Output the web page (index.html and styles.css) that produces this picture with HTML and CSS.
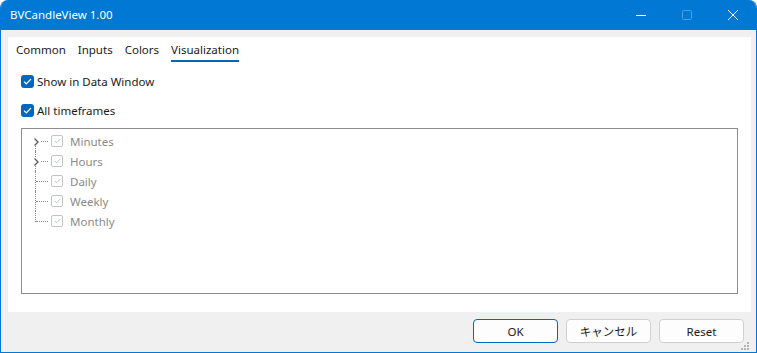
FILE: index.html
```html
<!DOCTYPE HTML>
<html>

<head>
    <title>BVCandleView 1.00</title>
    <meta http-equiv="Content-Type" content="text/html; charset=utf-8" />
    <link rel="stylesheet" href="styles.css">
</head>

<body>
    <div class="window">
        <div class="titlebar">
            <span class="caption">BVCandleView 1.00</span>
            <div class="sysbtns">
                <span class="sysbtn">
                    <svg width="10" height="10" viewBox="0 0 10 10"><path d="M0 5.5h10" stroke="#fff" stroke-width="1"/></svg>
                </span>
                <span class="sysbtn disabled">
                    <svg width="10" height="10" viewBox="0 0 10 10"><rect x="0.5" y="0.5" width="9" height="9" rx="1" fill="none" stroke="#fff" stroke-width="1"/></svg>
                </span>
                <span class="sysbtn">
                    <svg width="10" height="10" viewBox="0 0 10 10"><path d="M0 0L10 10M10 0L0 10" stroke="#fff" stroke-width="1"/></svg>
                </span>
            </div>
        </div>

        <div class="content">
            <div class="panel">
                <div class="tabs">
                    <span class="tab">Common</span>
                    <span class="tab">Inputs</span>
                    <span class="tab">Colors</span>
                    <span class="tab active">Visualization</span>
                </div>

                <label class="check">
                    <span class="box on"><svg width="9" height="7" viewBox="0 0 9 7"><path d="M1 3.6L3.3 5.8L8 1" fill="none" stroke="#fff" stroke-width="1.2"/></svg></span>
                    Show in Data Window
                </label>
                <label class="check">
                    <span class="box on"><svg width="9" height="7" viewBox="0 0 9 7"><path d="M1 3.6L3.3 5.8L8 1" fill="none" stroke="#fff" stroke-width="1.2"/></svg></span>
                    All timeframes
                </label>

                <div class="tree">
                    <div class="node first">
                        <span class="expander"><svg width="5" height="8" viewBox="0 0 5 8"><path d="M0.5 0.5L4 4L0.5 7.5" fill="none" stroke="#5a5a5a" stroke-width="1.3"/></svg></span>
                        <span class="box off"><svg width="7" height="6" viewBox="0 0 7 6"><path d="M0.8 3L2.6 4.8L6.2 1" fill="none" stroke="#a9c6e6" stroke-width="1"/></svg></span>
                        <span class="label">Minutes</span>
                    </div>
                    <div class="node">
                        <span class="expander"><svg width="5" height="8" viewBox="0 0 5 8"><path d="M0.5 0.5L4 4L0.5 7.5" fill="none" stroke="#5a5a5a" stroke-width="1.3"/></svg></span>
                        <span class="box off"><svg width="7" height="6" viewBox="0 0 7 6"><path d="M0.8 3L2.6 4.8L6.2 1" fill="none" stroke="#a9c6e6" stroke-width="1"/></svg></span>
                        <span class="label">Hours</span>
                    </div>
                    <div class="node">
                        <span class="box off"><svg width="7" height="6" viewBox="0 0 7 6"><path d="M0.8 3L2.6 4.8L6.2 1" fill="none" stroke="#a9c6e6" stroke-width="1"/></svg></span>
                        <span class="label">Daily</span>
                    </div>
                    <div class="node">
                        <span class="box off"><svg width="7" height="6" viewBox="0 0 7 6"><path d="M0.8 3L2.6 4.8L6.2 1" fill="none" stroke="#a9c6e6" stroke-width="1"/></svg></span>
                        <span class="label">Weekly</span>
                    </div>
                    <div class="node last">
                        <span class="box off"><svg width="7" height="6" viewBox="0 0 7 6"><path d="M0.8 3L2.6 4.8L6.2 1" fill="none" stroke="#a9c6e6" stroke-width="1"/></svg></span>
                        <span class="label">Monthly</span>
                    </div>
                </div>
            </div>

            <div class="footer">
                <button class="btn default">OK</button>
                <button class="btn">キャンセル</button>
                <button class="btn">Reset</button>
                <svg class="grip" width="8" height="8" viewBox="0 0 8 8">
                    <rect x="6" y="0" width="2" height="2" fill="#b4b4b4"/>
                    <rect x="3" y="3" width="2" height="2" fill="#b4b4b4"/>
                    <rect x="6" y="3" width="2" height="2" fill="#b4b4b4"/>
                    <rect x="0" y="6" width="2" height="2" fill="#b4b4b4"/>
                    <rect x="3" y="6" width="2" height="2" fill="#b4b4b4"/>
                    <rect x="6" y="6" width="2" height="2" fill="#b4b4b4"/>
                </svg>
            </div>
        </div>
    </div>
</body>

</html>
```

FILE: styles.css
```css
html, body {
    margin: 0;
    padding: 0;
    background: #ffffff;
}

body {
    font-family: "Segoe UI", "Noto Sans", "Noto Sans CJK JP", sans-serif;
    font-size: 11.5px;
    color: #1a1a1a;
}

.window {
    width: 755px;
    height: 352px;
    border: 1px solid #0078d4;
    border-top: 0;
    border-radius: 8px 8px 0 0;
    overflow: hidden;
    display: flex;
    flex-direction: column;
    background: #f0f0f0;
}

.titlebar {
    height: 30px;
    background: #0078d4;
    color: #ffffff;
    display: flex;
    align-items: center;
    justify-content: space-between;
    padding-left: 9px;
}

.caption {
    font-size: 11.5px;
    margin-top: -1px;
}

.sysbtns {
    display: flex;
    height: 30px;
}

.sysbtn {
    width: 46px;
    display: flex;
    align-items: center;
    justify-content: center;
}

.sysbtn svg {
    display: block;
}

.sysbtn.disabled svg {
    opacity: 0.3;
}

.content {
    flex: 1;
    display: flex;
    flex-direction: column;
    padding: 7px 5px 0 7px;
}

.panel {
    background: #ffffff;
    height: 275px;
    padding: 0 13px 0 13px;
}

.tabs {
    display: flex;
    height: 25px;
    align-items: flex-start;
    padding-top: 5px;
    margin-left: -5px;
    box-sizing: border-box;
}

.tab {
    margin-right: 12px;
    padding-bottom: 2px;
    line-height: 16px;
    border-bottom: 2px solid transparent;
}

.tab.active {
    border-bottom-color: #0067c0;
}

.check {
    display: flex;
    align-items: center;
    height: 16px;
    margin-top: 11px;
}

.check + .check {
    margin-top: 13px;
}

.box {
    width: 13px;
    height: 13px;
    box-sizing: border-box;
    border-radius: 3px;
    display: inline-flex;
    align-items: center;
    justify-content: center;
    margin-right: 3px;
    flex: none;
}

.box.on {
    background: #0067c0;
}

.box.off {
    width: 12px;
    height: 12px;
    border: 1px solid #c3c3c3;
    border-radius: 2px;
    background: #ffffff;
    margin-right: 7px;
}

.box svg {
    display: block;
}

.tree {
    margin-top: 10px;
    height: 162px;
    border: 1px solid #8e8e8e;
    padding-top: 2px;
    box-sizing: content-box;
}

.node {
    position: relative;
    height: 20px;
    display: flex;
    align-items: center;
    padding-left: 29px;
}

/* tree connector lines */
.node::before {
    content: "";
    position: absolute;
    left: 13px;
    top: 0;
    bottom: 0;
    border-left: 1px dotted #8c8c8c;
}

.node.first::before {
    top: 10px;
}

.node.last::before {
    bottom: 9px;
}

.node::after {
    content: "";
    position: absolute;
    left: 14px;
    width: 12px;
    top: 10px;
    border-top: 1px dotted #8c8c8c;
}

.expander {
    position: absolute;
    left: 10px;
    top: 6px;
    width: 9px;
    height: 9px;
    background: #ffffff;
    z-index: 1;
    display: flex;
    align-items: center;
    justify-content: center;
}

.expander svg {
    display: block;
}

.label {
    color: #8a8a8a;
}

.footer {
    position: relative;
    flex: 1;
    display: flex;
    justify-content: flex-end;
    align-items: flex-start;
    padding-top: 7px;
    padding-right: 7px;
    gap: 8px;
}

.btn {
    width: 85px;
    height: 24px;
    background: #fdfdfd;
    border: 1px solid #d0d0d0;
    border-radius: 4px;
    font-family: "Segoe UI", "Noto Sans", "Noto Sans CJK JP", sans-serif;
    font-size: 11.5px;
    color: #1a1a1a;
    padding: 0;
}

.btn.default {
    border-color: #0067c0;
}

.grip {
    position: absolute;
    right: 2px;
    bottom: 2px;
}
```
